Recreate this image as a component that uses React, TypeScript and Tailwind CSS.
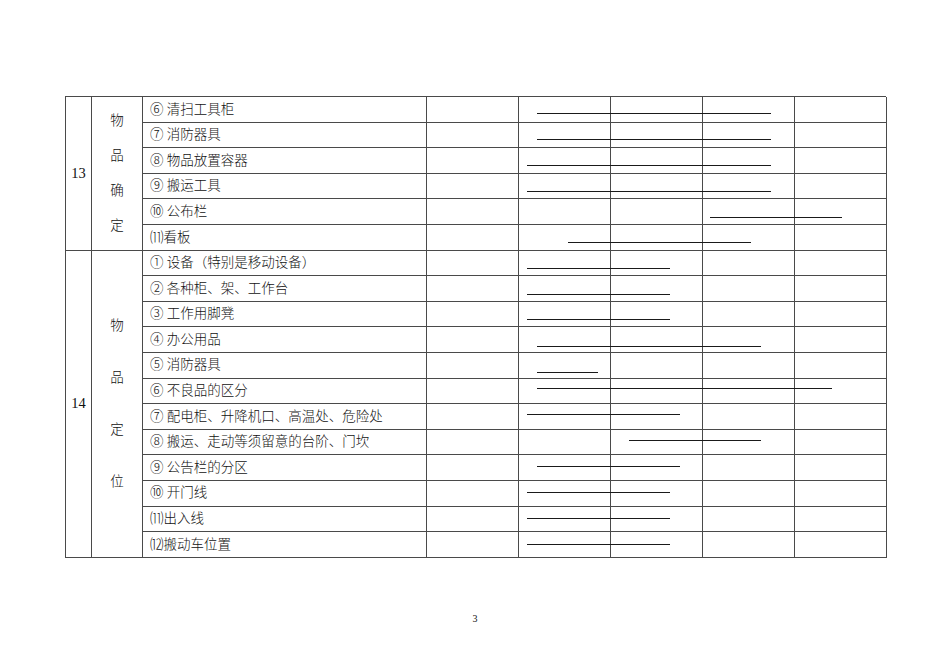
const COLS = "grid-cols-[26px_51px_284px_92px_92px_92px_92px_92px]";

const items13 = ["⑥ 清扫工具柜", "⑦ 消防器具", "⑧ 物品放置容器", "⑨ 搬运工具", "⑩ 公布栏", "⑾看板"];
const items14 = [
    "① 设备（特别是移动设备）",
    "② 各种柜、架、工作台",
    "③ 工作用脚凳",
    "④ 办公用品",
    "⑤ 消防器具",
    "⑥ 不良品的区分",
    "⑦ 配电柜、升降机口、高温处、危险处",
    "⑧ 搬运、走动等须留意的台阶、门坎",
    "⑨ 公告栏的分区",
    "⑩ 开门线",
    "⑾出入线",
    "⑿搬动车位置",
];

// schedule lines drawn over the table, coords relative to the table's top-left
const bars = [
    { x1: 472, x2: 706, y: 17 },
    { x1: 472, x2: 706, y: 43 },
    { x1: 462, x2: 706, y: 69 },
    { x1: 462, x2: 706, y: 94.5 },
    { x1: 645, x2: 777, y: 120.5 },
    { x1: 503, x2: 686, y: 146 },
    { x1: 462, x2: 605, y: 172 },
    { x1: 462, x2: 605, y: 197.5 },
    { x1: 462, x2: 605, y: 223 },
    { x1: 472, x2: 696, y: 249.5 },
    { x1: 472, x2: 533, y: 275.5 },
    { x1: 472, x2: 767, y: 292 },
    { x1: 462, x2: 615, y: 318 },
    { x1: 564, x2: 696, y: 344 },
    { x1: 472, x2: 615, y: 370 },
    { x1: 462, x2: 605, y: 396 },
    { x1: 462, x2: 605, y: 421.5 },
    { x1: 462, x2: 605, y: 447.5 },
];

function Cell({ children, className = "" }: { children?: React.ReactNode; className?: string }) {
    return <div className={`border-r border-b border-[#4a4a4a] ${className}`}>{children}</div>;
}

function ItemRows({ items }: { items: string[] }) {
    return (
        <>
            {items.map((text) => (
                <div key={text} className="contents">
                    <Cell className="flex items-center pl-[7px] whitespace-nowrap">{text}</Cell>
                    <Cell />
                    <Cell />
                    <Cell />
                    <Cell />
                    <Cell />
                </div>
            ))}
        </>
    );
}

export default function App() {
    return (
        <div
            className="w-[950px] h-[672px] bg-white text-[#111] text-[13.5px] font-light leading-none pt-[96px] pl-[65px]"
            style={{ fontFamily: '"Liberation Serif", "Noto Sans CJK SC", serif' }}
        >
            <div className="relative w-[821px]">
                <div className={`grid ${COLS} grid-rows-[repeat(6,25.6px)] border-l border-t border-[#4a4a4a]`}>
                    {/* block 13 */}
                    <Cell className="row-span-6 flex items-center justify-center text-[14.5px]">13</Cell>
                    <Cell className="row-span-6 flex flex-col items-center justify-center gap-[21.5px]">
                        <span>物</span>
                        <span>品</span>
                        <span>确</span>
                        <span>定</span>
                    </Cell>
                    <ItemRows items={items13} />
                </div>
                <div className={`grid ${COLS} grid-rows-[repeat(12,25.6px)] border-l border-[#4a4a4a]`}>
                    {/* block 14 */}
                    <Cell className="row-span-12 flex items-center justify-center text-[14.5px]">14</Cell>
                    <Cell className="row-span-12 flex flex-col items-center justify-center gap-[38.5px]">
                        <span>物</span>
                        <span>品</span>
                        <span>定</span>
                        <span>位</span>
                    </Cell>
                    <ItemRows items={items14} />
                </div>

                {bars.map((b, i) => (
                    <div
                        key={i}
                        className="absolute h-px bg-[#1a1a1a]"
                        style={{ left: b.x1, top: b.y, width: b.x2 - b.x1 }}
                    />
                ))}
            </div>

            <div className="-ml-[65px] mt-[56px] w-[950px] text-center text-[10px]">3</div>
        </div>
    );
}
